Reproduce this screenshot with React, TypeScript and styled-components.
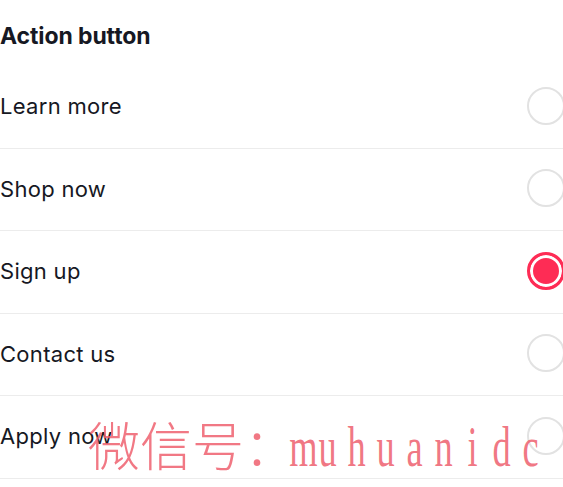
import React, { useState } from "react";
import styled, { createGlobalStyle } from "styled-components";

const Global = createGlobalStyle`
  html, body { margin: 0; padding: 0; background: #ffffff; }
  body { font-family: "Inter", "Lato", sans-serif; color: #161823; }
`;

const Page = styled.div`
  position: relative;
  width: 563px;
  height: 487px;
  overflow: hidden;
  background: #ffffff;
`;

const Title = styled.div`
  height: 66px;
  display: flex;
  align-items: center;
  font-size: 23px;
  font-weight: 700;
  letter-spacing: -0.1px;
  color: #161823;
  padding-top: 6px;
  box-sizing: border-box;
`;

const List = styled.div`
  display: flex;
  flex-direction: column;
`;

const Row = styled.label`
  height: 82.5px;
  display: flex;
  align-items: center;
  justify-content: space-between;
  border-bottom: 1px solid #ececec;
  box-sizing: border-box;
  cursor: pointer;
`;

const Label = styled.span`
  font-size: 22px;
  font-weight: 400;
  letter-spacing: 0.3px;
  color: #161823;
  padding-bottom: 1px;
`;

const Radio = styled.span<{ $checked: boolean }>`
  width: 38px;
  height: 38px;
  margin-right: -2px;
  margin-bottom: 2px;
  border-radius: 50%;
  box-sizing: border-box;
  border: ${(p) => (p.$checked ? "3px solid #fe2c55" : "2px solid #e2e2e2")};
  background: ${(p) => (p.$checked ? "#fe2c55" : "#fff")};
  box-shadow: ${(p) => (p.$checked ? "inset 0 0 0 3px #fff" : "none")};
  flex-shrink: 0;
`;

const Watermark = styled.div`
  position: absolute;
  left: 88px;
  top: 412px;
  height: 64px;
  display: flex;
  align-items: baseline;
  color: rgba(238, 96, 110, 0.85);
  white-space: nowrap;
  pointer-events: none;
`;

const WmCjk = styled.span`
  font-family: "Noto Sans CJK SC", sans-serif;
  font-weight: 300;
  font-size: 52px;
  line-height: 64px;
  margin-right: -12px;
`;

const WmChar = styled.span`
  display: inline-block;
  width: 29px;
  text-align: center;
  font-family: "Liberation Serif", serif;
  font-size: 57px;
  line-height: 64px;
  transform: scaleX(0.64);
`;

const options = ["Learn more", "Shop now", "Sign up", "Contact us", "Apply now"];

export default function App() {
  const [sel, setSel] = useState("Sign up");
  return (
    <Page>
      <Global />
      <Title>Action button</Title>
      <List>
        {options.map((o) => (
          <Row key={o} onClick={() => setSel(o)}>
            <Label>{o}</Label>
            <Radio $checked={sel === o} />
          </Row>
        ))}
      </List>
      <Watermark>
        <WmCjk>微信号：</WmCjk>
        {"muhuanidc".split("").map((c, i) => (
          <WmChar key={i}>{c}</WmChar>
        ))}
      </Watermark>
    </Page>
  );
}
